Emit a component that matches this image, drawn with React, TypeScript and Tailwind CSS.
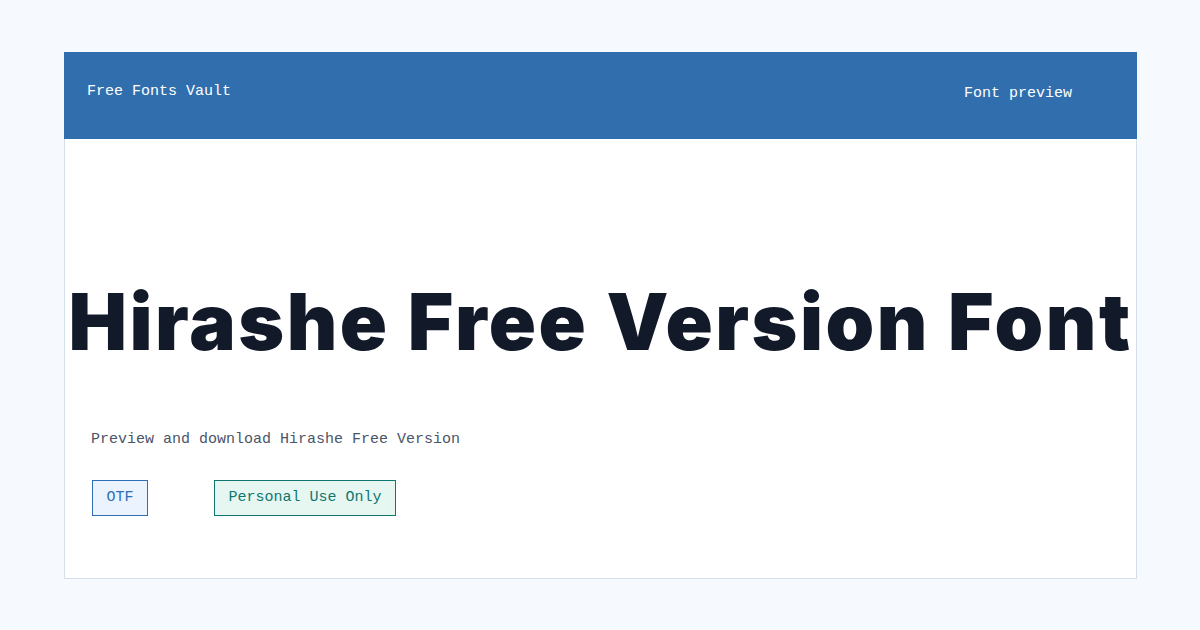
import React from 'react'

const mono = { fontFamily: '"Liberation Mono", "DejaVu Sans Mono", monospace' }

function Badge({ label, tone }: { label: string; tone: 'blue' | 'teal' }) {
  const cls =
    tone === 'blue'
      ? 'border-[#2f6fb3] bg-[#eaf3fe] text-[#2f6fb3]'
      : 'border-[#0f766e] bg-[#e6f7f2] text-[#0f766e]'
  return (
    <span className={`inline-flex h-[36px] items-center border px-[13.5px] text-[15px] ${cls}`} style={mono}>
      {label}
    </span>
  )
}

export default function App() {
  return (
    <div className="min-h-[630px] w-[1200px] bg-[#f6f9fd] pt-[52px]">
      <div className="ml-[64px] mr-[63px] flex h-[527px] flex-col border border-[#d5dfeb] bg-white">
        {/* top bar */}
        <div className="-mx-px -mt-px flex h-[87px] items-start justify-between bg-[#306eae] pl-[23px] pr-[65px] text-white">
          <span className="pt-[29px] text-[15px] leading-[22px]" style={mono}>
            Free Fonts Vault
          </span>
          <span className="pt-[31px] text-[15px] leading-[22px]" style={mono}>
            Font preview
          </span>
        </div>

        {/* title */}
        <div className="flex justify-center pt-[144px]">
          <h1
            className="whitespace-nowrap text-[78px] font-black leading-[78px] tracking-[2.5px] text-[#121a2a]"
            style={{ fontFamily: 'Inter, "Liberation Sans", sans-serif' }}
          >
            Hirashe Free Version Font
          </h1>
        </div>

        <p className="pl-[26px] pt-[68px] text-[15px] leading-[22px] text-[#4a5568]" style={mono}>
          Preview and download Hirashe Free Version
        </p>

        <div className="flex gap-[66px] pl-[27px] pt-[29px]">
          <Badge label="OTF" tone="blue" />
          <Badge label="Personal Use Only" tone="teal" />
        </div>
      </div>
    </div>
  )
}
